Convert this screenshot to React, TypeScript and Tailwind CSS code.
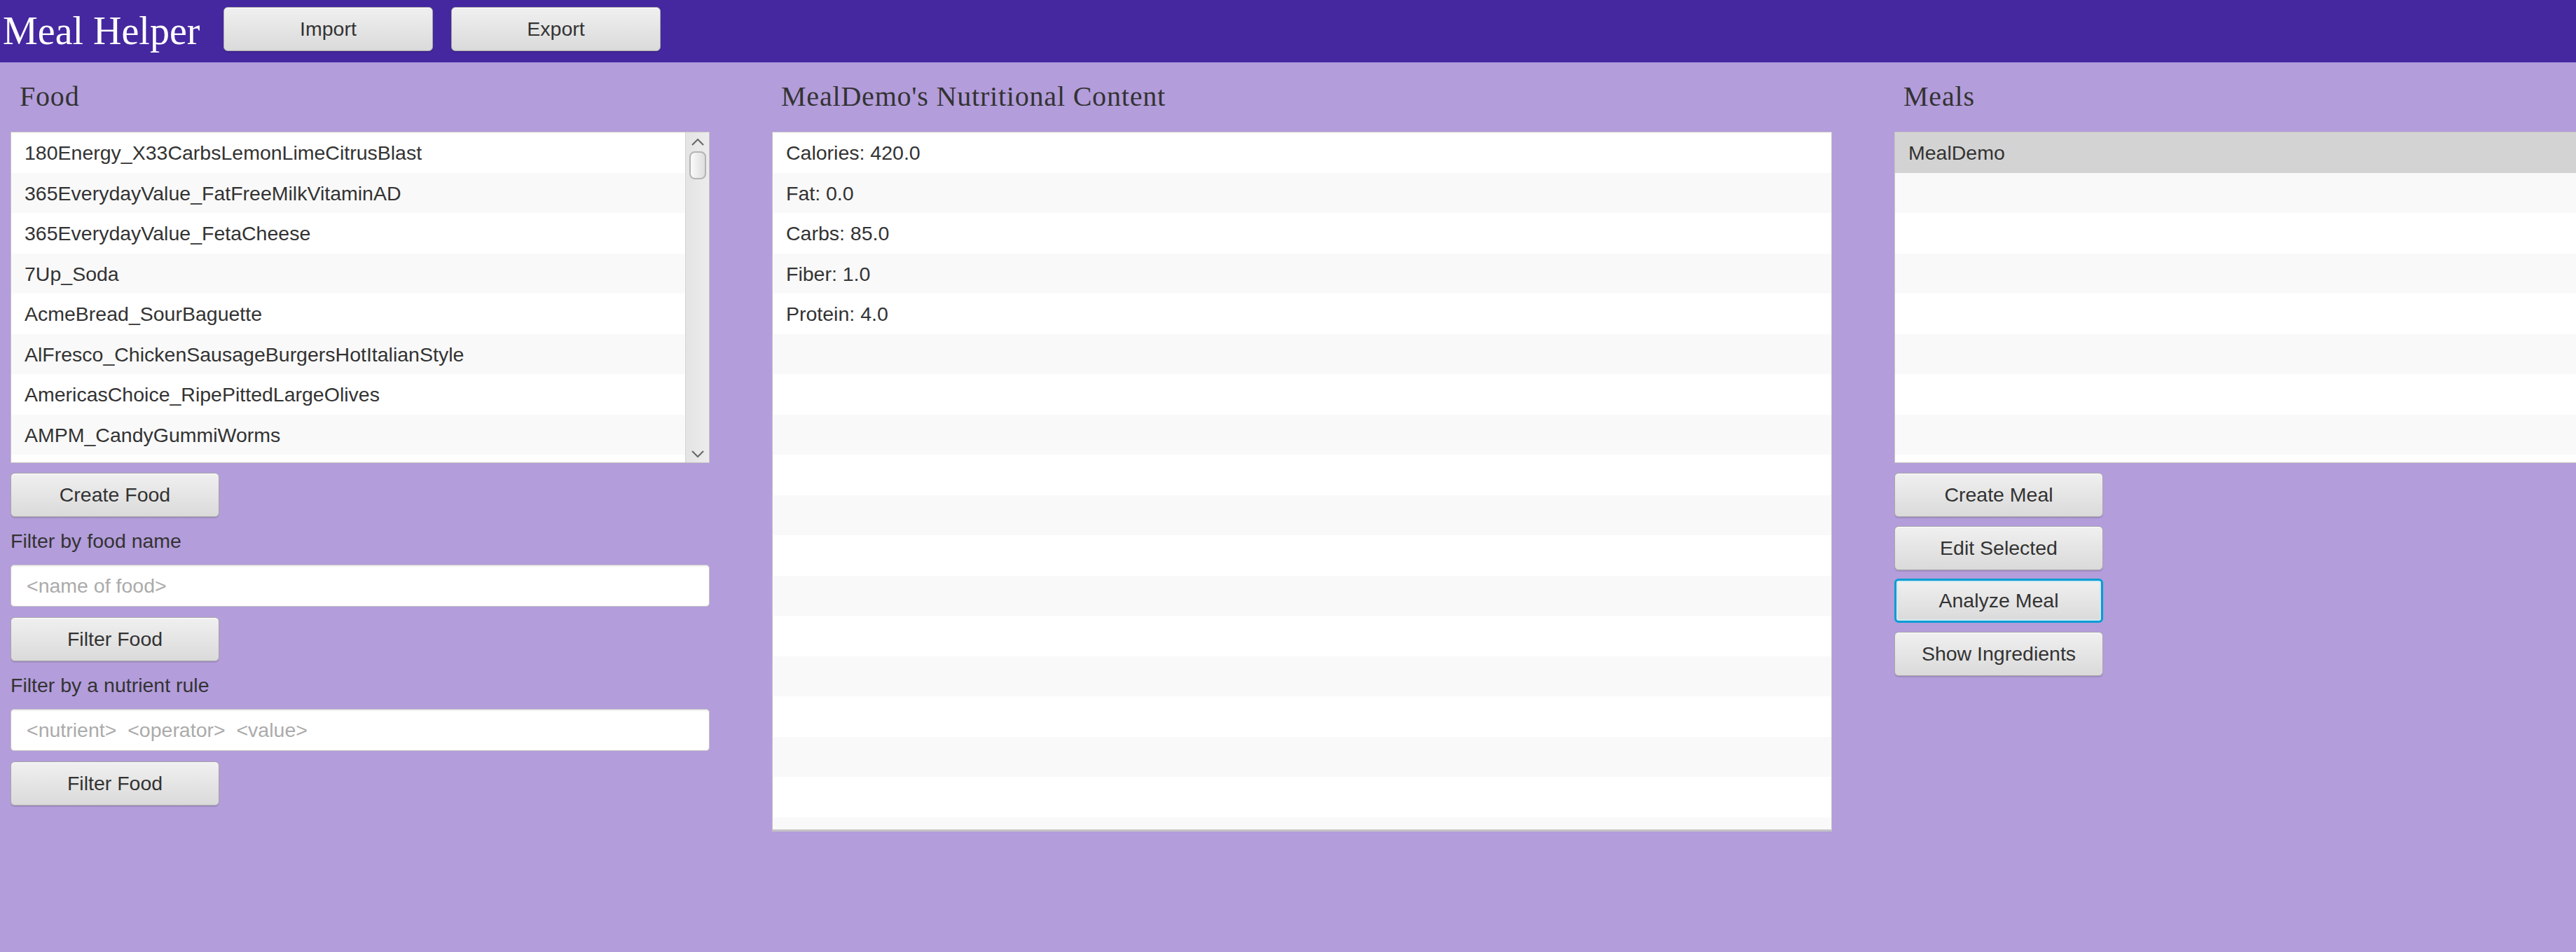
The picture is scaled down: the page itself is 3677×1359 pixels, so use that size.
import type { ReactNode } from 'react'

const foods = [
  '180Energy_X33CarbsLemonLimeCitrusBlast',
  '365EverydayValue_FatFreeMilkVitaminAD',
  '365EverydayValue_FetaCheese',
  '7Up_Soda',
  'AcmeBread_SourBaguette',
  'AlFresco_ChickenSausageBurgersHotItalianStyle',
  'AmericasChoice_RipePittedLargeOlives',
  'AMPM_CandyGummiWorms',
  '',
]

const nutrients = ['Calories: 420.0', 'Fat: 0.0', 'Carbs: 85.0', 'Fiber: 1.0', 'Protein: 4.0']

const sans = "font-['Liberation_Sans',Arial,sans-serif]"
const serif = "font-['Liberation_Serif','Times_New_Roman',serif]"

function FxButton({ children, focused = false, className = '' }: { children: ReactNode; focused?: boolean; className?: string }) {
  return (
    <button
      className={`h-[63px] w-[298px] shrink-0 rounded-[6px] border bg-linear-to-b from-[#f0f0f0] to-[#dadada] text-[28.5px] text-[#333333] ${sans} ${
        focused
          ? 'border-[3px] border-[#039ed3] shadow-[inset_0_0_0_2px_#d3e9f3]'
          : 'border-[#a6a6a6] shadow-[inset_0_1px_0_#ffffff,0_2px_0_rgba(0,0,0,0.1)]'
      } ${className}`}
    >
      {children}
    </button>
  )
}

function Row({ text, index, selected = false }: { text: string; index: number; selected?: boolean }) {
  const bg = selected ? 'bg-[#d3d3d3]' : index % 2 === 0 ? 'bg-white' : 'bg-[#f9f9f9]'
  return (
    <div className={`h-[57.5px] shrink-0 whitespace-nowrap pl-[19px] pt-[1px] text-[28.5px] leading-[57.5px] text-[#333333] ${sans} ${bg}`}>
      {text}
    </div>
  )
}

function Title({ children }: { children: ReactNode }) {
  return (
    <div className={`mb-[27px] mt-[26px] pl-[13px] text-[40px] leading-[46px] tracking-[0.8px] text-[#333333] ${serif}`}>
      {children}
    </div>
  )
}

function Scrollbar() {
  return (
    <div className="flex w-[34px] shrink-0 flex-col items-center justify-between border-l border-[#d4d4d4] bg-linear-to-r from-[#e4e4e4] to-[#ececec] pb-[6px] pt-[8px]">
      <div className="flex flex-col items-center">
        <svg width="20" height="12" viewBox="0 0 20 12" fill="none">
          <path d="M2 10 L10 2 L18 10" stroke="#6a6a6a" strokeWidth="2.2" />
        </svg>
        <div className="mt-[7px] h-[40px] w-[24px] rounded-[8px] border-2 border-[#b4b4b4] bg-linear-to-r from-[#fafafa] to-[#dedede]" />
      </div>
      <svg width="20" height="12" viewBox="0 0 20 12" fill="none">
        <path d="M2 2 L10 10 L18 2" stroke="#6a6a6a" strokeWidth="2.2" />
      </svg>
    </div>
  )
}

function FxInput({ placeholder }: { placeholder: string }) {
  return (
    <div
      className={`flex h-[60px] items-center whitespace-pre rounded-[5px] border border-[#c2c2c2] bg-white pl-[22px] text-[28.5px] text-[#ababab] shadow-[inset_0_2px_2px_rgba(0,0,0,0.06)] ${sans}`}
    >
      {placeholder}
    </div>
  )
}

function Label({ children }: { children: ReactNode }) {
  return <div className={`h-[68px] text-[28.5px] leading-[68px] text-[#333333] ${sans}`}>{children}</div>
}

export default function App() {
  return (
    <div className="h-[1359px] w-[3677px] overflow-hidden bg-[#b39ddb]">
      <header className="flex h-[89px] items-start bg-[#4527a0]">
        <div className={`w-[319px] shrink-0 pl-[4px] text-[56px] leading-[89px] text-white ${serif}`}>Meal Helper</div>
        <div className="mt-[10px] flex gap-[26px]">
          <FxButton className="w-[299px]">Import</FxButton>
          <FxButton className="w-[299px]">Export</FxButton>
        </div>
      </header>

      <main className="flex gap-[89px] pl-[15px]">
        <section className="flex w-[998px] shrink-0 flex-col">
          <Title>Food</Title>
          <div className="flex h-[473px] overflow-hidden border border-[#c4c4c4] bg-white">
            <div className="flex min-w-0 flex-1 flex-col overflow-hidden">
              {foods.map((f, i) => (
                <Row key={i} text={f} index={i} />
              ))}
            </div>
            <Scrollbar />
          </div>
          <FxButton className="mt-[14px]">Create Food</FxButton>
          <Label>Filter by food name</Label>
          <FxInput placeholder="<name of food>" />
          <FxButton className="mt-[15px]">Filter Food</FxButton>
          <Label>Filter by a nutrient rule</Label>
          <FxInput placeholder="<nutrient>  <operator>  <value>" />
          <FxButton className="mt-[15px]">Filter Food</FxButton>
        </section>

        <section className="flex w-[1513px] shrink-0 flex-col">
          <Title>MealDemo&apos;s Nutritional Content</Title>
          <div className="flex h-[999px] flex-col overflow-hidden border border-b-[3px] border-[#c4c4c4] bg-white">
            {Array.from({ length: 18 }).map((_, i) => (
              <Row key={i} text={nutrients[i] ?? ''} index={i} />
            ))}
          </div>
        </section>

        <section className="flex w-[998px] shrink-0 flex-col">
          <Title>Meals</Title>
          <div className="flex h-[473px] flex-col overflow-hidden border border-[#c4c4c4] bg-white">
            {Array.from({ length: 9 }).map((_, i) => (
              <Row key={i} text={i === 0 ? 'MealDemo' : ''} index={i} selected={i === 0} />
            ))}
          </div>
          <div className="mt-[14px] flex flex-col gap-[12.5px]">
            <FxButton>Create Meal</FxButton>
            <FxButton>Edit Selected</FxButton>
            <FxButton focused>Analyze Meal</FxButton>
            <FxButton>Show Ingredients</FxButton>
          </div>
        </section>
      </main>
    </div>
  )
}
